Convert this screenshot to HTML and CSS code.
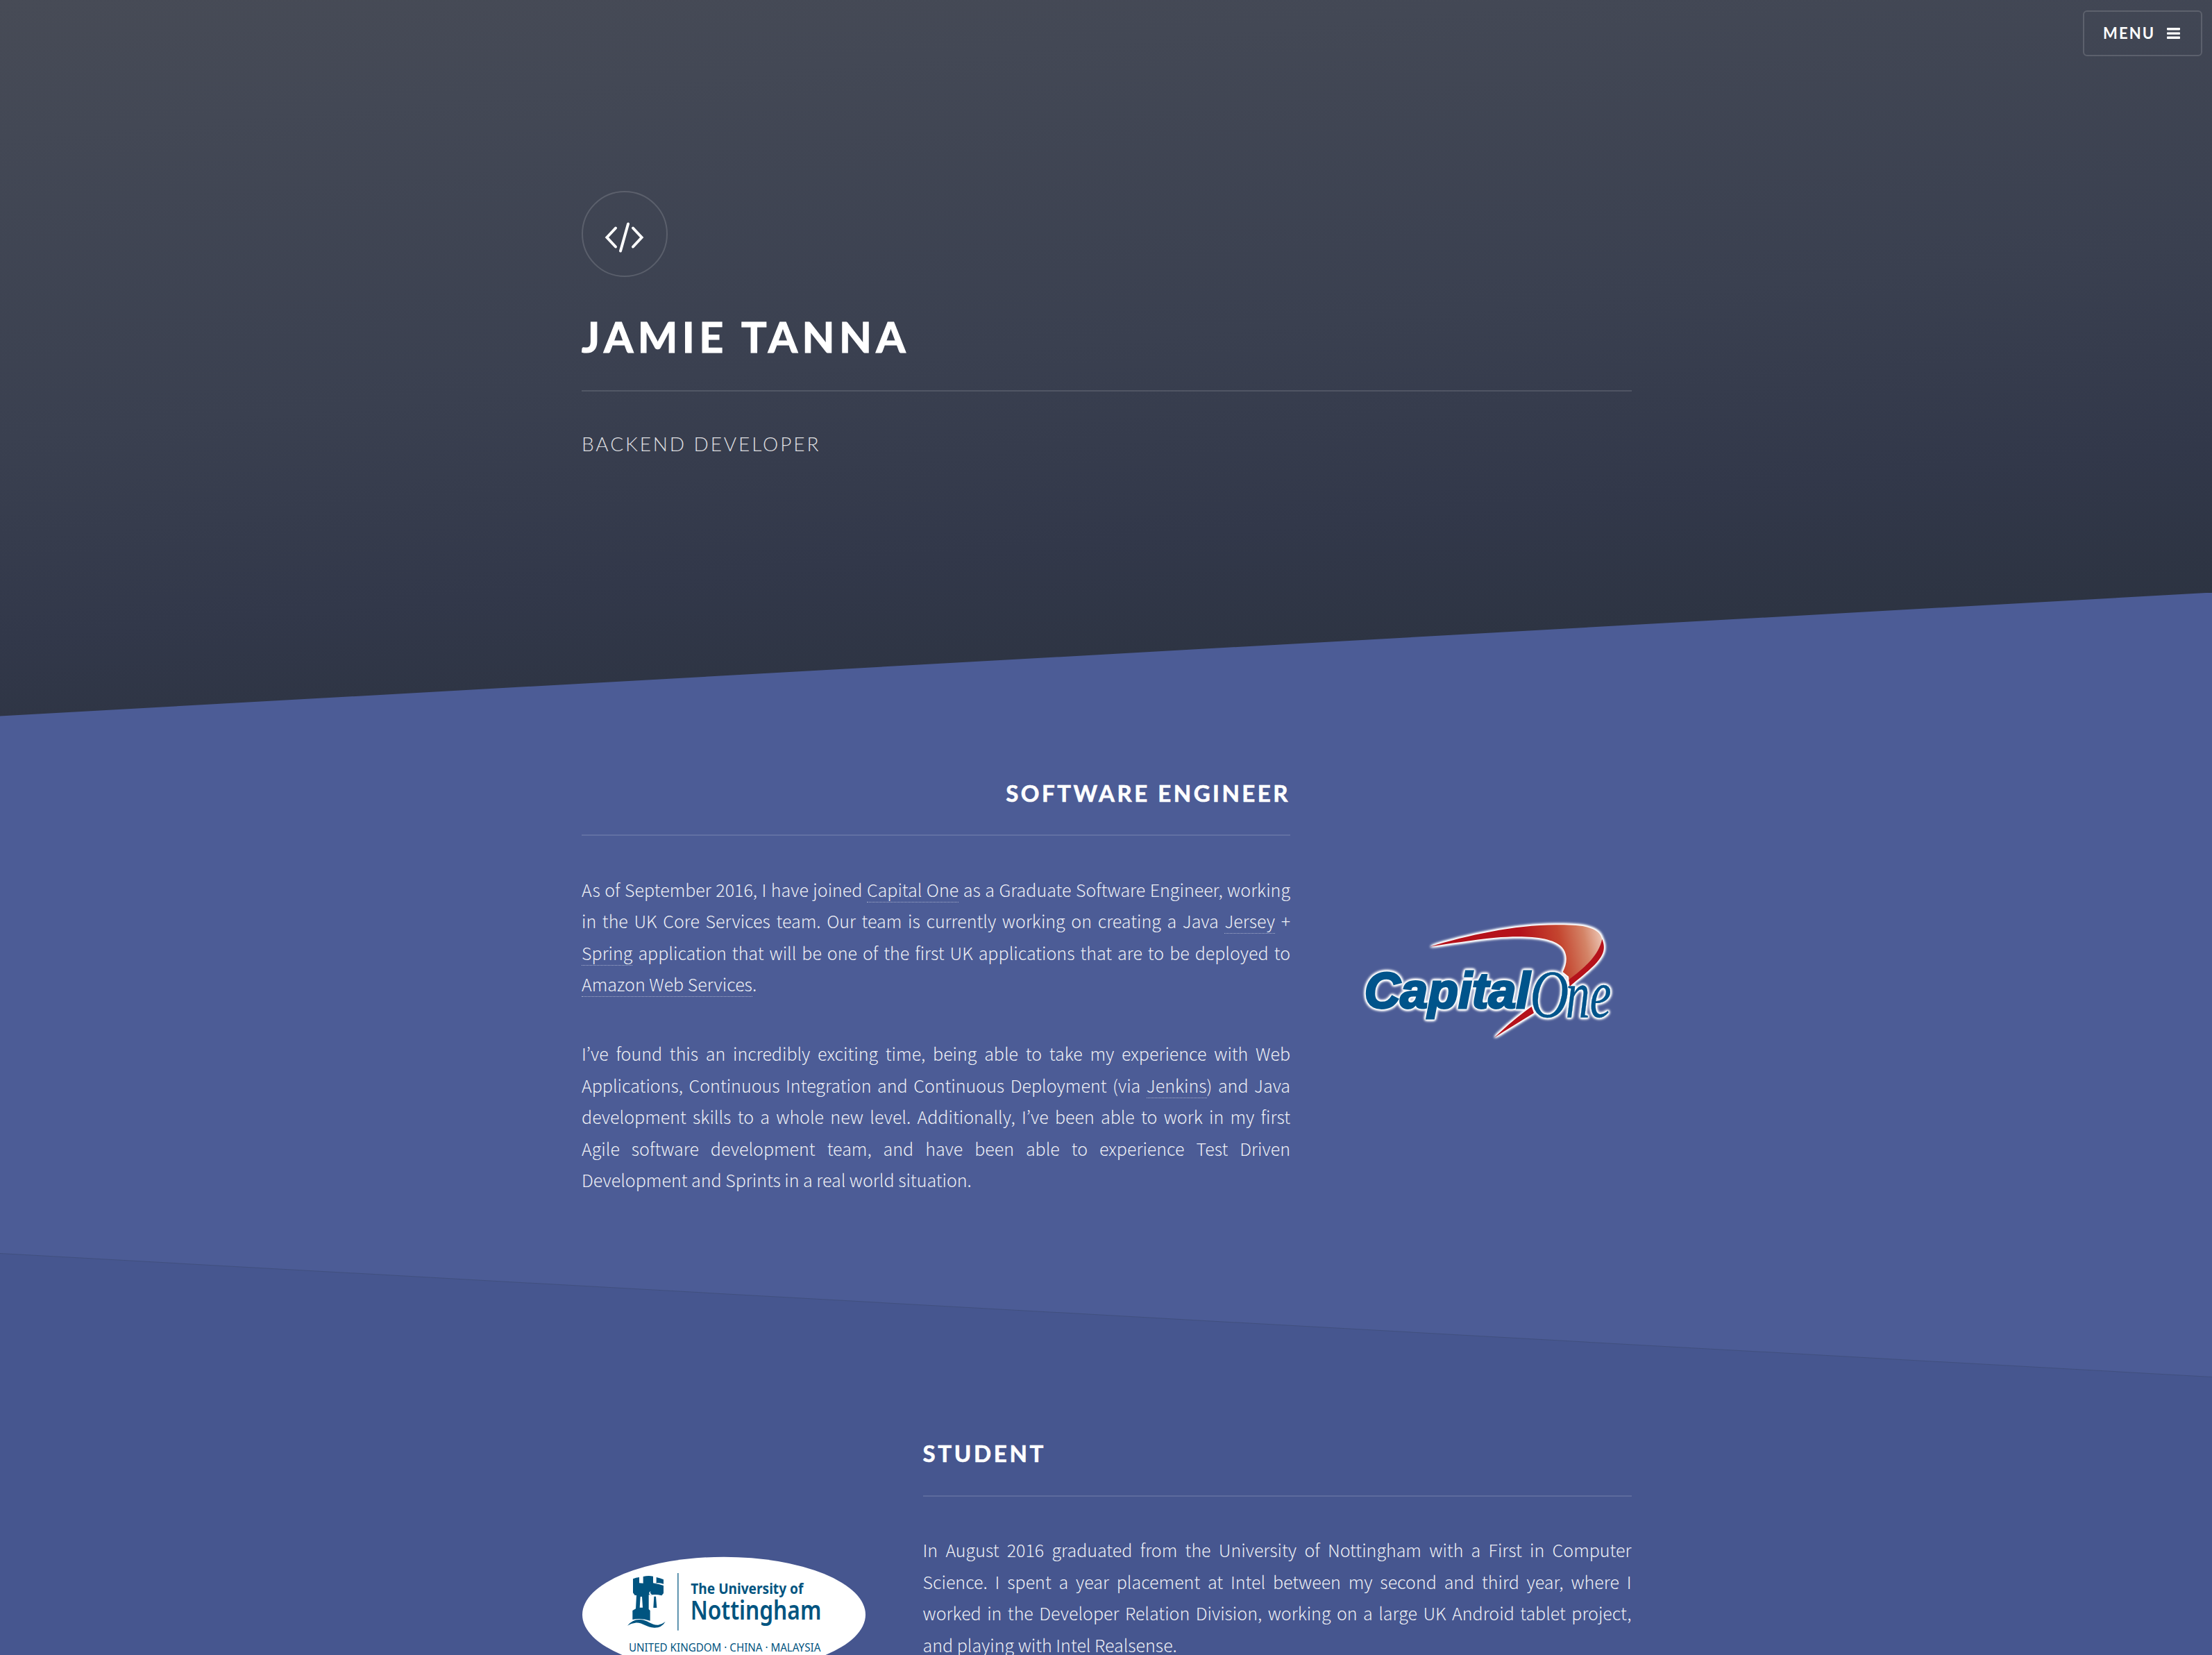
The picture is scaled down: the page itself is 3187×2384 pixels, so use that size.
FILE: index.html
```html
<!DOCTYPE html>
<html lang="en">
<head>
<meta charset="utf-8">
<title>Jamie Tanna</title>
<link rel="stylesheet" href="styles.css">
</head>
<body>
<a class="menu" href="#menu">Menu
  <svg class="menu-icon" viewBox="0 0 19 16"><rect width="19" height="3.4" rx=".8"/><rect y="6.4" width="19" height="3.4" rx=".8"/><rect y="12.6" width="19" height="3.4" rx=".8"/></svg>
</a>

<header class="banner">
  <div class="inner">
    <div class="logo">
      <svg class="code-icon" viewBox="0 0 58 44" fill="none" stroke="#fff" stroke-width="4" stroke-linecap="round" stroke-linejoin="miter"><path d="M16 8.500 3.400 22 16 35.500M41 8.500 53.600 22 41 35.500M34 2.500 23 41.500"/></svg>
    </div>
    <h1>Jamie Tanna</h1>
    <p class="tagline">Backend Developer</p>
  </div>
</header>

<section class="spotlight spotlight-right">
  <div class="inner row">
    <div class="content">
      <h2>Software Engineer</h2>
      <p>As of September 2016, I have joined <a href="#">Capital One</a> as a Graduate Software Engineer, working in the UK Core Services team. Our team is currently working on creating a Java <a href="#">Jersey</a> + <a href="#">Spring</a> application that will be one of the first UK applications that are to be deployed to <a href="#">Amazon Web Services</a>.</p>
      <p>I’ve found this an incredibly exciting time, being able to take my experience with Web Applications, Continuous Integration and Continuous Deployment (via <a href="#">Jenkins</a>) and Java development skills to a whole new level. Additionally, I’ve been able to work in my first Agile software development team, and have been able to experience Test Driven Development and Sprints in a real world situation.</p>
    </div>
    <svg class="image capital" viewBox="6 0 1224 657">
      <defs>
        <linearGradient id="swoosh" gradientUnits="userSpaceOnUse" x1="760" y1="160" x2="1110" y2="90">
          <stop offset="0" stop-color="#b5121b"/><stop offset=".45" stop-color="#c4452f"/><stop offset=".75" stop-color="#d48467"/><stop offset="1" stop-color="#f0cfc0"/>
        </linearGradient>
      </defs>
      <g class="mark">
        <path class="swoosh" d="M358 161C520 112 720 68 900 67C1010 66 1090 72 1102 130C1106 190 1010 285 962 332L957 290L932 270C950 235 956 195 928 163C885 116 760 112 640 122C540 132 440 148 358 161Z"/>
        <path class="edge" d="M1102 128C1118 168 1108 195 1080 228C1045 267 1000 300 962 332L958 304C1020 255 1085 205 1102 128Z"/>
        <path class="edge" d="M797 420L807 448C750 482 690 520 636 554C690 503 740 460 797 420Z"/>
        <text class="capital-text" x="74" y="425" textLength="716" lengthAdjust="spacingAndGlyphs">Capital</text>
        <text class="one" x="790" y="464" textLength="168" lengthAdjust="spacingAndGlyphs">O</text>
        <text class="one" x="944" y="464" textLength="198" lengthAdjust="spacingAndGlyphs">ne</text>
      </g>
    </svg>
  </div>
</section>

<section class="spotlight spotlight-left">
  <div class="inner row">
    <svg class="image nottingham" viewBox="54 0 1224 600">
      <ellipse cx="666" cy="315" rx="612" ry="250" fill="#fff"/>
      <g fill="#005480">
        <path d="M273 160Q286 154 300 153V178L317 179V150Q339 145 360 149V178L374 180V153Q392 157 405 163V182Q385 175 362 179Q386 181 405 189V222L397 232Q373 226 356 229L341 229V291L347 297V341Q325 333 300 333Q283 333 271 336V297L285 289L288 231H281L273 220Z"/>
        <path d="M364 236H372L376 285H361Z"/>
        <path d="M249 362Q273 333 305 336C338 339 354 361 382 359Q398 357 413 345Q397 372 365 371C331 370 311 346 283 350Q265 352 249 362Z"/>
        <rect x="465" y="135" width="5" height="248" opacity=".75"/>
      </g>
      <path d="M305 237H312L315 284H302ZM349 213Q338 220 346 229L355 227Q345 224 349 213Z" fill="#fff"/>
      <text class="uni-small" x="523" y="225" textLength="486" lengthAdjust="spacingAndGlyphs">The University of</text>
      <text class="uni-large" x="521" y="336" textLength="566" lengthAdjust="spacingAndGlyphs">Nottingham</text>
      <text class="uni-places" x="255" y="474" textLength="829" lengthAdjust="spacingAndGlyphs">UNITED KINGDOM · CHINA · MALAYSIA</text>
    </svg>
    <div class="content">
      <h2>Student</h2>
      <p>In August 2016 graduated from the University of Nottingham with a First in Computer Science. I spent a year placement at Intel between my second and third year, where I worked in the Developer Relation Division, working on a large UK Android tablet project, and playing with Intel Realsense.</p>
    </div>
  </div>
</section>
</body>
</html>
```

FILE: styles.css
```css
* { box-sizing: border-box; }

body {
  margin: 0;
  height: 2384px;
  overflow: hidden;
  background: #2e3141;
  color: #fff;
  font: 300 25px/45.5px "Noto Sans CJK JP", "Noto Sans", sans-serif;
}

h1, h2, .tagline, .menu {
  margin: 0;
  font-family: Lato, sans-serif;
  text-transform: uppercase;
}

/* floating menu button */
.menu {
  position: absolute;
  top: 15px;
  right: 14px;
  z-index: 10;
  display: flex;
  align-items: center;
  justify-content: space-between;
  width: 172px;
  height: 66px;
  padding: 0 30px 0 27px;
  border: 2px solid rgba(255, 255, 255, .15);
  border-radius: 6px;
  color: #fff;
  font-size: 22px;
  font-weight: 700;
  letter-spacing: 2.1px;
  text-decoration: none;
}
.menu-icon { width: 19px; height: 16px; fill: #fff; }

.inner { width: 1513px; margin: 0 auto; }

/* banner */
.banner {
  height: 1033px;
  padding: 275px 0 0 2px;
  background: linear-gradient(175deg, #474b56 0%, #434855 15%, #3a4050 48%, #32384a 70%, #2c3341 88%, #2b3240 100%);
}
.logo {
  display: flex;
  align-items: center;
  justify-content: center;
  width: 124px;
  height: 124px;
  padding-top: 9px;
  border: 2px solid rgba(255, 255, 255, .15);
  border-radius: 50%;
}
.code-icon { width: 58px; height: 44px; }
h1 {
  margin-top: 46px;
  padding-bottom: 37px;
  border-bottom: 2px solid rgba(255, 255, 255, .125);
  font-size: 61px;
  font-weight: 700;
  line-height: 80px;
  letter-spacing: 6.4px;
  -webkit-text-stroke: 1.2px #fff;
}
.tagline {
  margin-top: 55px;
  color: rgba(255, 255, 255, .85);
  font-size: 28px;
  font-weight: 300;
  line-height: 40px;
  letter-spacing: 2.9px;
}

/* slanted sections */
.spotlight {
  position: relative;
  isolation: isolate;
  height: 1130px;
  padding: 263px 0 0 2px;
}
.spotlight-right {
  margin-top: -179.500px;
  background: #4c5c96;
  clip-path: polygon(0 178px, 100% 0, 100% 100%, 0 100%);
}
.spotlight-left {
  height: 580px;
  margin-top: -178.500px;
  background: #41507f;
  overflow: hidden;
  clip-path: polygon(0 0, 100% 178px, 100% 100%, 0 100%);
}
.spotlight-left::before {
  content: "";
  position: absolute;
  inset: 0;
  z-index: -1;
  background: #46568f;
  clip-path: polygon(0 1px, 100% 179px, 100% 100%, 0 100%);
}
.row { display: flex; justify-content: space-between; align-items: center; }
.spotlight-left .row { align-items: flex-start; width: 1512px; }
.content { width: 1021px; }
.image { width: 408px; }
.capital { height: 219px; }
.nottingham { height: 200px; margin-top: 153px; }

h2 {
  padding-bottom: 35.500px;
  border-bottom: 2px solid rgba(255, 255, 255, .125);
  font-size: 33px;
  font-weight: 700;
  line-height: 50px;
  letter-spacing: 3.5px;
  -webkit-text-stroke: .6px #fff;
}
.spotlight-right h2 { text-align: right; }
.spotlight-left h2 { letter-spacing: 3.700px; }

.content p {
  margin: 54.500px 0 0;
  color: rgba(255, 255, 255, .92);
  text-align: justify;
}
.content a {
  color: inherit;
  text-decoration: none;
  border-bottom: 1px dotted rgba(255, 255, 255, .5);
}

/* Capital One logo */
.mark { filter: drop-shadow(0 0 5px #fff) drop-shadow(0 0 5px #fff) drop-shadow(0 0 4px #fff) drop-shadow(0 0 3px #fff); }
.swoosh { fill: url(#swoosh); }
.edge { fill: #b5121b; }
.capital-text, .one { fill: #00548b; stroke: #00548b; }
.capital-text { font: italic 700 216px "Liberation Sans", sans-serif; stroke-width: 9px; }
.one { font: italic 400 292px "Liberation Serif", serif; stroke-width: 1px; }

/* University of Nottingham logo */
.uni-small, .uni-large, .uni-places { fill: #005480; font-family: "Noto Sans", sans-serif; }
.uni-small { font-size: 64px; font-weight: 700; }
.uni-large { font-size: 112px; font-weight: 600; }
.uni-places { font-size: 49px; font-weight: 400; }
```
